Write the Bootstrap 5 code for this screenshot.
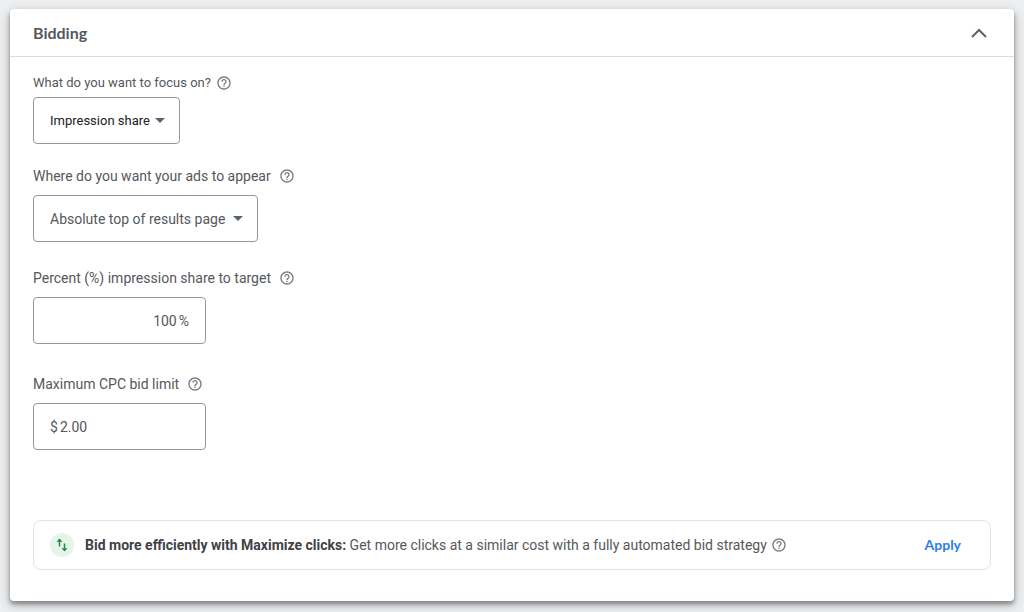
<!DOCTYPE html>
<html lang="en">
<head>
<meta charset="utf-8">
<meta name="viewport" content="width=device-width, initial-scale=1">
<title>Bidding</title>
<link href="https://cdn.jsdelivr.net/npm/bootstrap@5.3.0/dist/css/bootstrap.min.css" rel="stylesheet">
<style>
body { background: #eeeff1; color: #55585d; font-family: Roboto, sans-serif; font-size: 14px; line-height: 20px; }
.page { padding: 9px 10px 11px; }
.panel { --bs-card-border-width: 0; --bs-card-border-radius: 4px; color: inherit; box-shadow: 0 3px 4px rgba(60,64,67,.5), 0 4px 12px rgba(60,64,67,.3); }
.panel-head { height: 48px; padding: 0 23px; border-bottom: 1px solid #dadce0; }
.panel-title { font-family: Lato, sans-serif; font-size: 16px; line-height: 20px; font-weight: 700; color: #55585d; }
.panel-body { padding: 16px 23px 31px; }
.icon-btn { color: #777b80; line-height: 0; }
.panel-head .icon-btn { color: #5f6368; }
.small-text, .small-text .field-box { font-size: 13px; }
.label-row { gap: 8px; margin-bottom: 9px; }
.small-text .label-row { gap: 5px; margin-bottom: 4px; }
.field-box { height: 47px; border: 1px solid #94989d; border-radius: 4px; color: #55585d; font-size: 14px; line-height: 20px; }
select.field-box { width: auto; padding: 0 31px 0 16px;
  --bs-form-select-bg-img: url("data:image/svg+xml,%3csvg xmlns='http://www.w3.org/2000/svg' viewBox='0 0 10 5'%3e%3cpath fill='%235f6368' d='M0 0h10L5 5z'/%3e%3c/svg%3e");
  background-size: 10px 5px; background-position: right 14px center; }
.small-text select.field-box { color: #202124; padding-right: 29px; }
.value-box { width: 173px; padding: 0 16px; gap: 2px; }
.value-box input { min-width: 0; padding: 0; border: 0; outline: 0; background: none; color: inherit; }
.value-box:focus-within { border-color: #1a73e8; }
.gap-a { margin-bottom: 22px; }
.gap-b { margin-bottom: 26px; }
.gap-c { margin-bottom: 30px; }
.gap-d { margin-bottom: 70px; }
.tip-box { min-height: 50px; padding: 0 29px 0 16px; border: 1px solid #e0e2e5; border-radius: 8px; }
.tip-icon { margin-right: 11px; }
.tip-box strong { font-weight: 700; color: #3f4246; }
.apply-btn { font-family: Lato, sans-serif; font-size: 14px; line-height: 20px; font-weight: 700; color: #2b7de9; }
</style>
</head>
<body>
<svg class="d-none" aria-hidden="true">
  <symbol id="help" viewBox="0 0 24 24"><path fill="currentColor" d="M11 18h2v-2h-2v2zm1-16C6.480 2 2 6.480 2 12s4.480 10 10 10 10-4.480 10-10S17.520 2 12 2zm0 18c-4.410 0-8-3.590-8-8s3.590-8 8-8 8 3.590 8 8-3.590 8-8 8zm0-14c-2.210 0-4 1.790-4 4h2c0-1.100.9-2 2-2s2 .9 2 2c0 2-3 1.750-3 5h2c0-2.250 3-2.500 3-5 0-2.210-1.790-4-4-4z"/></symbol>
</svg>
<main class="page">
  <section class="card panel">
    <header class="panel-head d-flex align-items-center justify-content-between">
      <h1 class="panel-title m-0">Bidding</h1>
      <button type="button" class="icon-btn btn p-0 border-0" aria-label="Collapse" aria-expanded="true">
        <svg width="24" height="24" viewBox="0 0 24 24" fill="none" stroke="currentColor" stroke-width="2"><path d="M5 16l7-7 7 7"/></svg>
      </button>
    </header>
    <form class="panel-body">
      <div class="gap-a small-text">
        <div class="label-row d-flex align-items-center">
          <label for="focus">What do you want to focus on?</label>
          <button type="button" class="icon-btn btn p-0 border-0" aria-label="Help"><svg width="16" height="16"><use href="#help"/></svg></button>
        </div>
        <select id="focus" class="form-select field-box"><option>Impression share</option></select>
      </div>
      <div class="gap-b">
        <div class="label-row d-flex align-items-center">
          <label for="where">Where do you want your ads to appear</label>
          <button type="button" class="icon-btn btn p-0 border-0" aria-label="Help"><svg width="16" height="16"><use href="#help"/></svg></button>
        </div>
        <select id="where" class="form-select field-box"><option>Absolute top of results page</option></select>
      </div>
      <div class="gap-c">
        <div class="label-row d-flex align-items-center">
          <label for="share">Percent (%) impression share to target</label>
          <button type="button" class="icon-btn btn p-0 border-0" aria-label="Help"><svg width="16" height="16"><use href="#help"/></svg></button>
        </div>
        <div class="field-box value-box d-flex align-items-center">
          <input id="share" class="flex-grow-1 text-end" type="text" inputmode="numeric" value="100"><span>%</span>
        </div>
      </div>
      <div class="gap-d">
        <div class="label-row d-flex align-items-center">
          <label for="limit">Maximum CPC bid limit</label>
          <button type="button" class="icon-btn btn p-0 border-0" aria-label="Help"><svg width="16" height="16"><use href="#help"/></svg></button>
        </div>
        <div class="field-box value-box d-flex align-items-center">
          <span>$</span><input id="limit" class="flex-grow-1" type="text" inputmode="decimal" value="2.00">
        </div>
      </div>
      <div class="tip-box d-flex align-items-center">
        <svg class="tip-icon flex-shrink-0" width="24" height="24" viewBox="0 0 24 24" aria-hidden="true"><circle cx="12" cy="12" r="12" fill="#e6f4ea"/><path fill="none" stroke="#1e8e3e" stroke-width="1.500" d="M9.500 13.500V6.500M14.500 10.500v7"/><path fill="#1e8e3e" d="M6.500 8.700L9.500 5.500l3 3.200zM11.500 15.300l3 3.200 3-3.200z"/></svg>
        <span><strong>Bid more efficiently with Maximize clicks:</strong> Get more clicks at a similar cost with a fully automated bid strategy</span>
        <button type="button" class="icon-btn btn p-0 border-0 ms-1" aria-label="Help"><svg width="16" height="16"><use href="#help"/></svg></button>
        <button type="button" class="apply-btn btn p-0 border-0 ms-auto">Apply</button>
      </div>
    </form>
  </section>
</main>
<script src="https://cdn.jsdelivr.net/npm/bootstrap@5.3.0/dist/js/bootstrap.bundle.min.js"></script>
</body>
</html>
